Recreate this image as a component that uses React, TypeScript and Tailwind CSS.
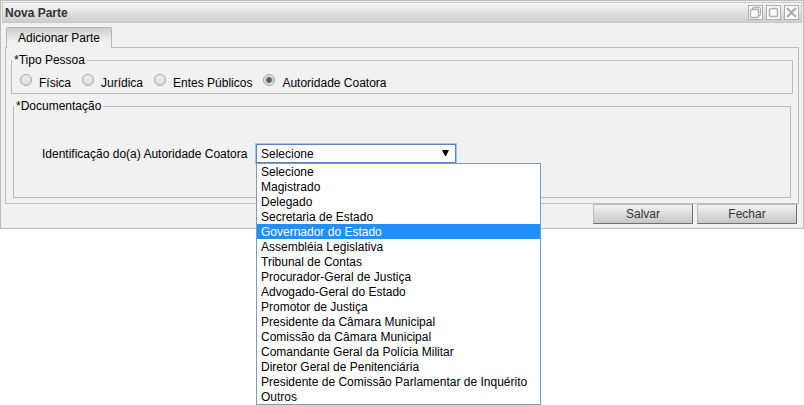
import { useState } from "react";

const personTypes = ["Física", "Jurídica", "Entes Públicos", "Autoridade Coatora"];

const authorities = [
  "Selecione",
  "Magistrado",
  "Delegado",
  "Secretaria de Estado",
  "Governador do Estado",
  "Assembléia Legislativa",
  "Tribunal de Contas",
  "Procurador-Geral de Justiça",
  "Advogado-Geral do Estado",
  "Promotor de Justiça",
  "Presidente da Câmara Municipal",
  "Comissão da Câmara Municipal",
  "Comandante Geral da Polícia Militar",
  "Diretor Geral de Penitenciária",
  "Presidente de Comissão Parlamentar de Inquérito",
  "Outros",
];

const windowButton =
  "flex size-[15px] items-center justify-center border border-[#adadad] bg-[#fcfcfc] text-[#b0b0b0]";

const actionButton =
  "h-5 w-[100px] border border-t-[#bebebe] border-l-[#bebebe] border-r-[#6e6e6e] border-b-[#6e6e6e] bg-linear-to-b from-[#f2f2f2] to-[#c6c6c6] text-xs leading-4 text-[#333]";

function TitleBar() {
  return (
    <header className="mx-px mt-px flex h-[21px] items-center justify-between border border-[#c8c8c8] bg-linear-to-b from-[#f6f6f6] to-[#cdcdcd] pr-0.5 pl-0.5">
      <h1 className="text-xs leading-4 font-bold text-[#333]">Nova Parte</h1>
      <div className="flex gap-[3px]">
        <button type="button" aria-label="Restaurar" className={windowButton}>
          <svg width="13" height="13" viewBox="0 0 13 13" fill="none" stroke="currentColor" strokeWidth="1.3">
            <path d="M3.5 3.5V2.5L4.5 1.5H10.5L11.5 2.5V8.5L10.5 9.5H9.5" />
            <rect x="1.5" y="3.5" width="8" height="8" rx="1" />
          </svg>
        </button>
        <button type="button" aria-label="Maximizar" className={windowButton}>
          <svg width="13" height="13" viewBox="0 0 13 13" fill="none" stroke="currentColor" strokeWidth="1.5">
            <rect x="2.5" y="2.5" width="8" height="8" rx="1" />
          </svg>
        </button>
        <button type="button" aria-label="Fechar janela" className={windowButton}>
          <svg width="13" height="13" viewBox="0 0 13 13" fill="none" stroke="currentColor" strokeWidth="2.3">
            <path d="M2 2L11 11M11 2L2 11" />
          </svg>
        </button>
      </div>
    </header>
  );
}

export default function App() {
  const [person, setPerson] = useState("Autoridade Coatora");
  const [authority, setAuthority] = useState("Selecione");

  return (
    <div className="min-h-screen bg-white">
      <main className="border border-[#bbb] bg-[#f1f1f1] font-['Liberation_Sans',Arial,sans-serif] text-xs text-black">
        <TitleBar />
        <div className="px-1 pt-1">
          <div role="tablist" className="ml-px flex">
            <button
              type="button"
              role="tab"
              aria-selected="true"
              className="relative -mb-px h-[21px] rounded-t-xs border border-b-0 border-[#b5b5b5] bg-linear-to-b from-[#cfcfcf] to-[#f1f1f1] to-70% px-[11px] text-xs leading-5"
            >
              Adicionar Parte
            </button>
          </div>
          <section role="tabpanel" className="flex flex-col gap-[5px] border border-[#bbb] p-[5px]">
            <fieldset className="border border-[#bbb]">
              <legend className="px-0.5 leading-[14px]">*Tipo Pessoa</legend>
              <div className="flex h-[26px] gap-[11px] pt-[7px] pl-2">
                {personTypes.map((type) => (
                  <label key={type} className="flex items-start gap-[7px]">
                    <input
                      type="radio"
                      name="person"
                      checked={person === type}
                      onChange={() => setPerson(type)}
                      className="size-3 appearance-none rounded-full border border-[#a5a5a5] bg-linear-to-b from-[#eee] to-[#dcdcdc] checked:bg-[radial-gradient(circle,#5a5a5a_0_2px,#e4e4e4_4px)]"
                    />
                    <span className="pt-0.5 leading-[14px]">{type}</span>
                  </label>
                ))}
              </div>
            </fieldset>
            <fieldset className="mx-0.5 border border-[#bbb]">
              <legend className="px-0.5 leading-[14px]">*Documentação</legend>
              <div className="flex items-center gap-1 pt-[31px] pb-[34px] pl-7">
                <label htmlFor="authority" className="w-[210px]">
                  Identificação do(a) Autoridade Coatora
                </label>
                <div className="relative h-[19px]">
                  <select
                    id="authority"
                    value={authority}
                    onChange={(event) => setAuthority(event.target.value)}
                    className="block h-[19px] w-[200px] appearance-none border border-[#5a84c8] bg-white pl-1 text-xs leading-4 outline-1 outline-[#a3c0ee]"
                  >
                    {authorities.map((name) => (
                      <option key={name}>{name}</option>
                    ))}
                  </select>
                  <svg
                    className="pointer-events-none absolute top-1.5 right-[7px]"
                    width="7"
                    height="7"
                    viewBox="0 0 7 7"
                    aria-hidden="true"
                  >
                    <path d="M0 0H7L4 6H3Z" />
                  </svg>
                  <ul
                    role="listbox"
                    aria-label="Autoridade Coatora"
                    className="absolute top-full left-0 z-10 w-[285px] border border-[#7f9db9] bg-white"
                  >
                    {authorities.map((name) => (
                      <li
                        key={name}
                        role="option"
                        aria-selected={name === "Governador do Estado"}
                        onClick={() => setAuthority(name)}
                        className="pt-px pl-1 leading-[14px] whitespace-nowrap aria-selected:bg-[#1e90ff] aria-selected:text-white"
                      >
                        {name}
                      </li>
                    ))}
                  </ul>
                </div>
              </div>
            </fieldset>
          </section>
        </div>
        <footer className="flex justify-end gap-1 pr-1.5 pb-1">
          <button type="button" className={actionButton}>
            Salvar
          </button>
          <button type="button" className={actionButton}>
            Fechar
          </button>
        </footer>
      </main>
    </div>
  );
}
